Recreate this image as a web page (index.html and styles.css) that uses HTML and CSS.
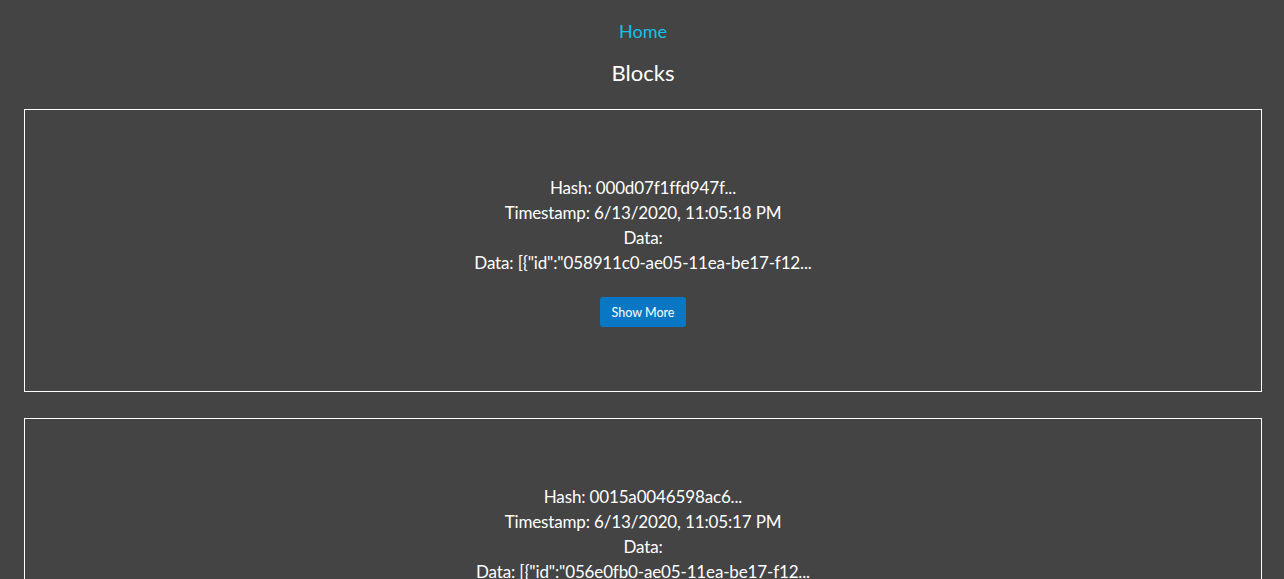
FILE: index.html
```html
<!DOCTYPE html>
<html>
<head>
<meta charset="utf-8">
<link rel="stylesheet" href="styles.css">
</head>
<body>
<div class="page">
  <nav class="nav"><a class="home" href="#">Home</a></nav>
  <h3 class="title">Blocks</h3>
  <div class="block">
    <div class="line">Hash: 000d07f1ffd947f...</div>
    <div class="line">Timestamp: 6/13/2020, 11:05:18 PM</div>
    <div class="line">Data:</div>
    <div class="line">Data: [{"id":"058911c0-ae05-11ea-be17-f12...</div>
    <button class="btn">Show More</button>
  </div>
  <div class="block">
    <div class="line">Hash: 0015a0046598ac6...</div>
    <div class="line">Timestamp: 6/13/2020, 11:05:17 PM</div>
    <div class="line">Data:</div>
    <div class="line">Data: [{"id":"056e0fb0-ae05-11ea-be17-f12...</div>
    <button class="btn">Show More</button>
  </div>
</div>
</body>
</html>
```
FILE: styles.css
```css
html, body {
  margin: 0;
  padding: 0;
  background: #444444;
}
body {
  font-family: "Lato", "Noto Sans", sans-serif;
  color: #ffffff;
  font-size: 17px;
}
.page {
  padding: 0 22px 0 24px;
  display: flex;
  flex-direction: column;
}
.nav {
  display: flex;
  justify-content: center;
  padding-top: 20px;
  height: 23px;
}
.home {
  color: #12c2ec;
  text-decoration: none;
  font-size: 18px;
  line-height: 23px;
}
.title {
  margin: 16px 0 0 0;
  text-align: center;
  font-size: 22px;
  font-weight: 400;
  line-height: 27px;
  height: 50px;
}
.block {
  border: 1px solid #ffffff;
  padding: 65px 0 64px 0;
  display: flex;
  flex-direction: column;
  align-items: center;
  margin-bottom: 26px;
  height: 283px;
  box-sizing: border-box;
}
.line {
  line-height: 25px;
  text-align: center;
  letter-spacing: -0.15px;
}
.btn {
  margin-top: 22px;
  background: #0a77c4;
  color: #ffffff;
  border: none;
  border-radius: 3px;
  font-family: inherit;
  font-size: 12.5px;
  width: 86px;
  height: 30px;
  padding: 0;
}
```
